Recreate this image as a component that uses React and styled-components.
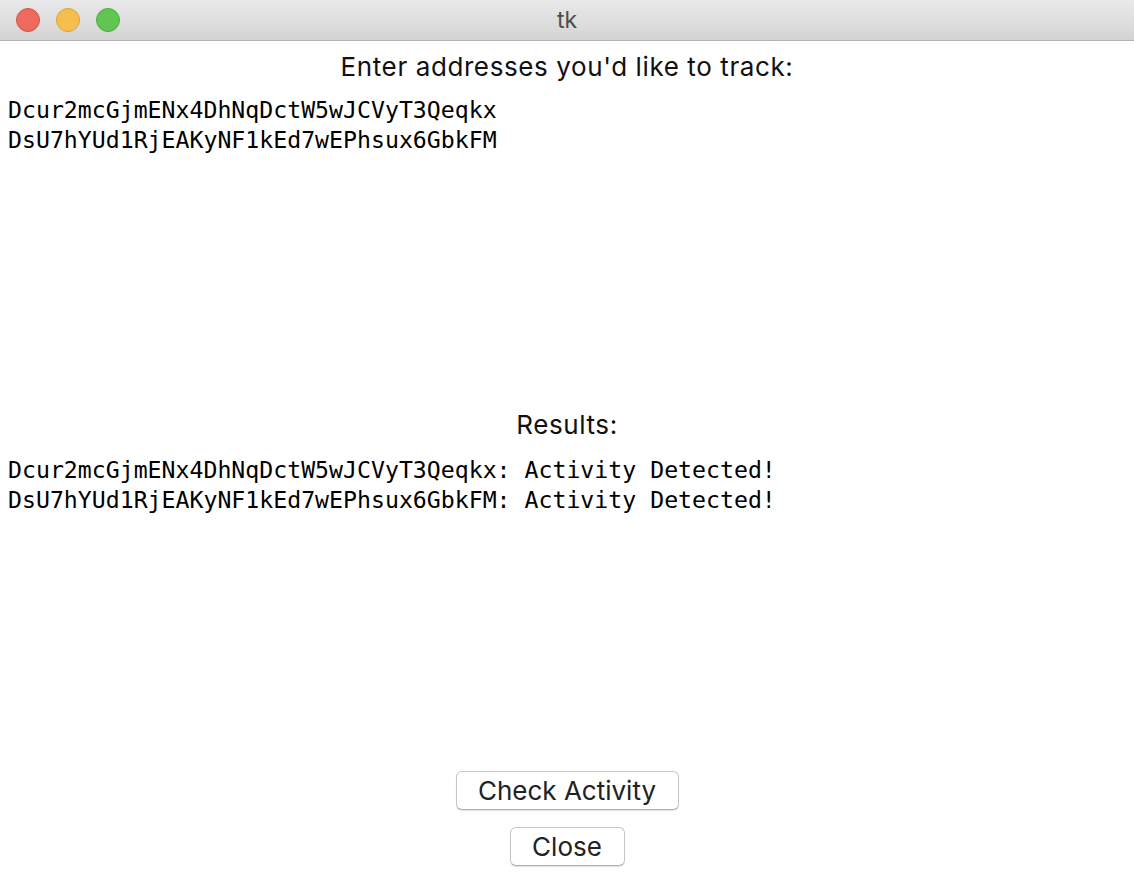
import React from "react";
import styled, { createGlobalStyle } from "styled-components";

const Global = createGlobalStyle`
  html, body { margin: 0; padding: 0; background: #ffffff; }
  body { font-family: Inter, "Liberation Sans", Arial, sans-serif; }
`;

const Window = styled.div`
  display: flex;
  flex-direction: column;
  width: 1134px;
  height: 874px;
  background: #ffffff;
  overflow: hidden;
`;

const TitleBar = styled.div`
  position: relative;
  height: 40px;
  flex: 0 0 40px;
  background: linear-gradient(#e9e9e9, #d4d4d4);
  border-bottom: 1px solid #b3b3b3;
  display: flex;
  align-items: center;
  justify-content: center;
`;

const Lights = styled.div`
  position: absolute;
  left: 16px;
  top: 8px;
  display: flex;
  gap: 16px;
`;

const Light = styled.span`
  width: 24px;
  height: 24px;
  border-radius: 50%;
  box-sizing: border-box;
  background: ${(p) => p.$fill};
  border: 1px solid ${(p) => p.$edge};
`;

const Title = styled.div`
  font-family: Inter, "Liberation Sans", Arial, sans-serif;
  font-size: 23px;
  color: #4d4d4d;
`;

const Content = styled.div`
  flex: 1;
  display: flex;
  flex-direction: column;
`;

const Label = styled.div`
  height: ${(p) => p.$h}px;
  flex: 0 0 auto;
  display: flex;
  align-items: center;
  justify-content: center;
  font-family: Inter, "Liberation Sans", Arial, sans-serif;
  font-size: 26px;
  letter-spacing: 0.6px;
  color: #111111;
`;

const TextBox = styled.div`
  ${(p) => (p.$h ? `height: ${p.$h}px; flex: 0 0 auto;` : "flex: 1;")}
  padding: ${(p) => p.$pt}px 8px 0;
  box-sizing: border-box;
  font-family: "DejaVu Sans Mono", Menlo, monospace;
  font-size: 23.2px;
  line-height: 30px;
  color: #000000;
  white-space: pre;
`;

const Line = styled.div``;

const Buttons = styled.div`
  display: flex;
  flex-direction: column;
  align-items: center;
  gap: 17px;
  padding-bottom: 8px;
`;

const Button = styled.button`
  width: ${(p) => p.$w}px;
  height: 39px;
  box-sizing: border-box;
  border: 1px solid #c6c6c6;
  border-bottom-color: #b0b0b0;
  border-radius: 6px;
  background: #ffffff;
  box-shadow: 0 1px 1px rgba(0, 0, 0, 0.12);
  font-family: Inter, "Liberation Sans", Arial, sans-serif;
  font-size: 26px;
  color: #222222;
  padding: 0;
`;

const addresses = [
  "Dcur2mcGjmENx4DhNqDctW5wJCVyT3Qeqkx",
  "DsU7hYUd1RjEAKyNF1kEd7wEPhsux6GbkFM",
];

export default function App() {
  return (
    <>
      <Global />
      <Window>
        <TitleBar>
          <Lights>
            <Light $fill="#ed6a5e" $edge="#d25448" />
            <Light $fill="#f5bf4f" $edge="#d9a23a" />
            <Light $fill="#61c554" $edge="#4fa942" />
          </Lights>
          <Title>tk</Title>
        </TitleBar>
        <Content>
          <Label $h={50}>Enter addresses you'd like to track:</Label>
          <TextBox $h={308} $pt={4}>
            {addresses.map((a) => (
              <Line key={a}>{a}</Line>
            ))}
          </TextBox>
          <Label $h={50}>Results:</Label>
          <TextBox $pt={6}>
            {addresses.map((a) => (
              <Line key={a}>{a}: Activity Detected!</Line>
            ))}
          </TextBox>
          <Buttons>
            <Button $w={223}>Check Activity</Button>
            <Button $w={115}>Close</Button>
          </Buttons>
        </Content>
      </Window>
    </>
  );
}
